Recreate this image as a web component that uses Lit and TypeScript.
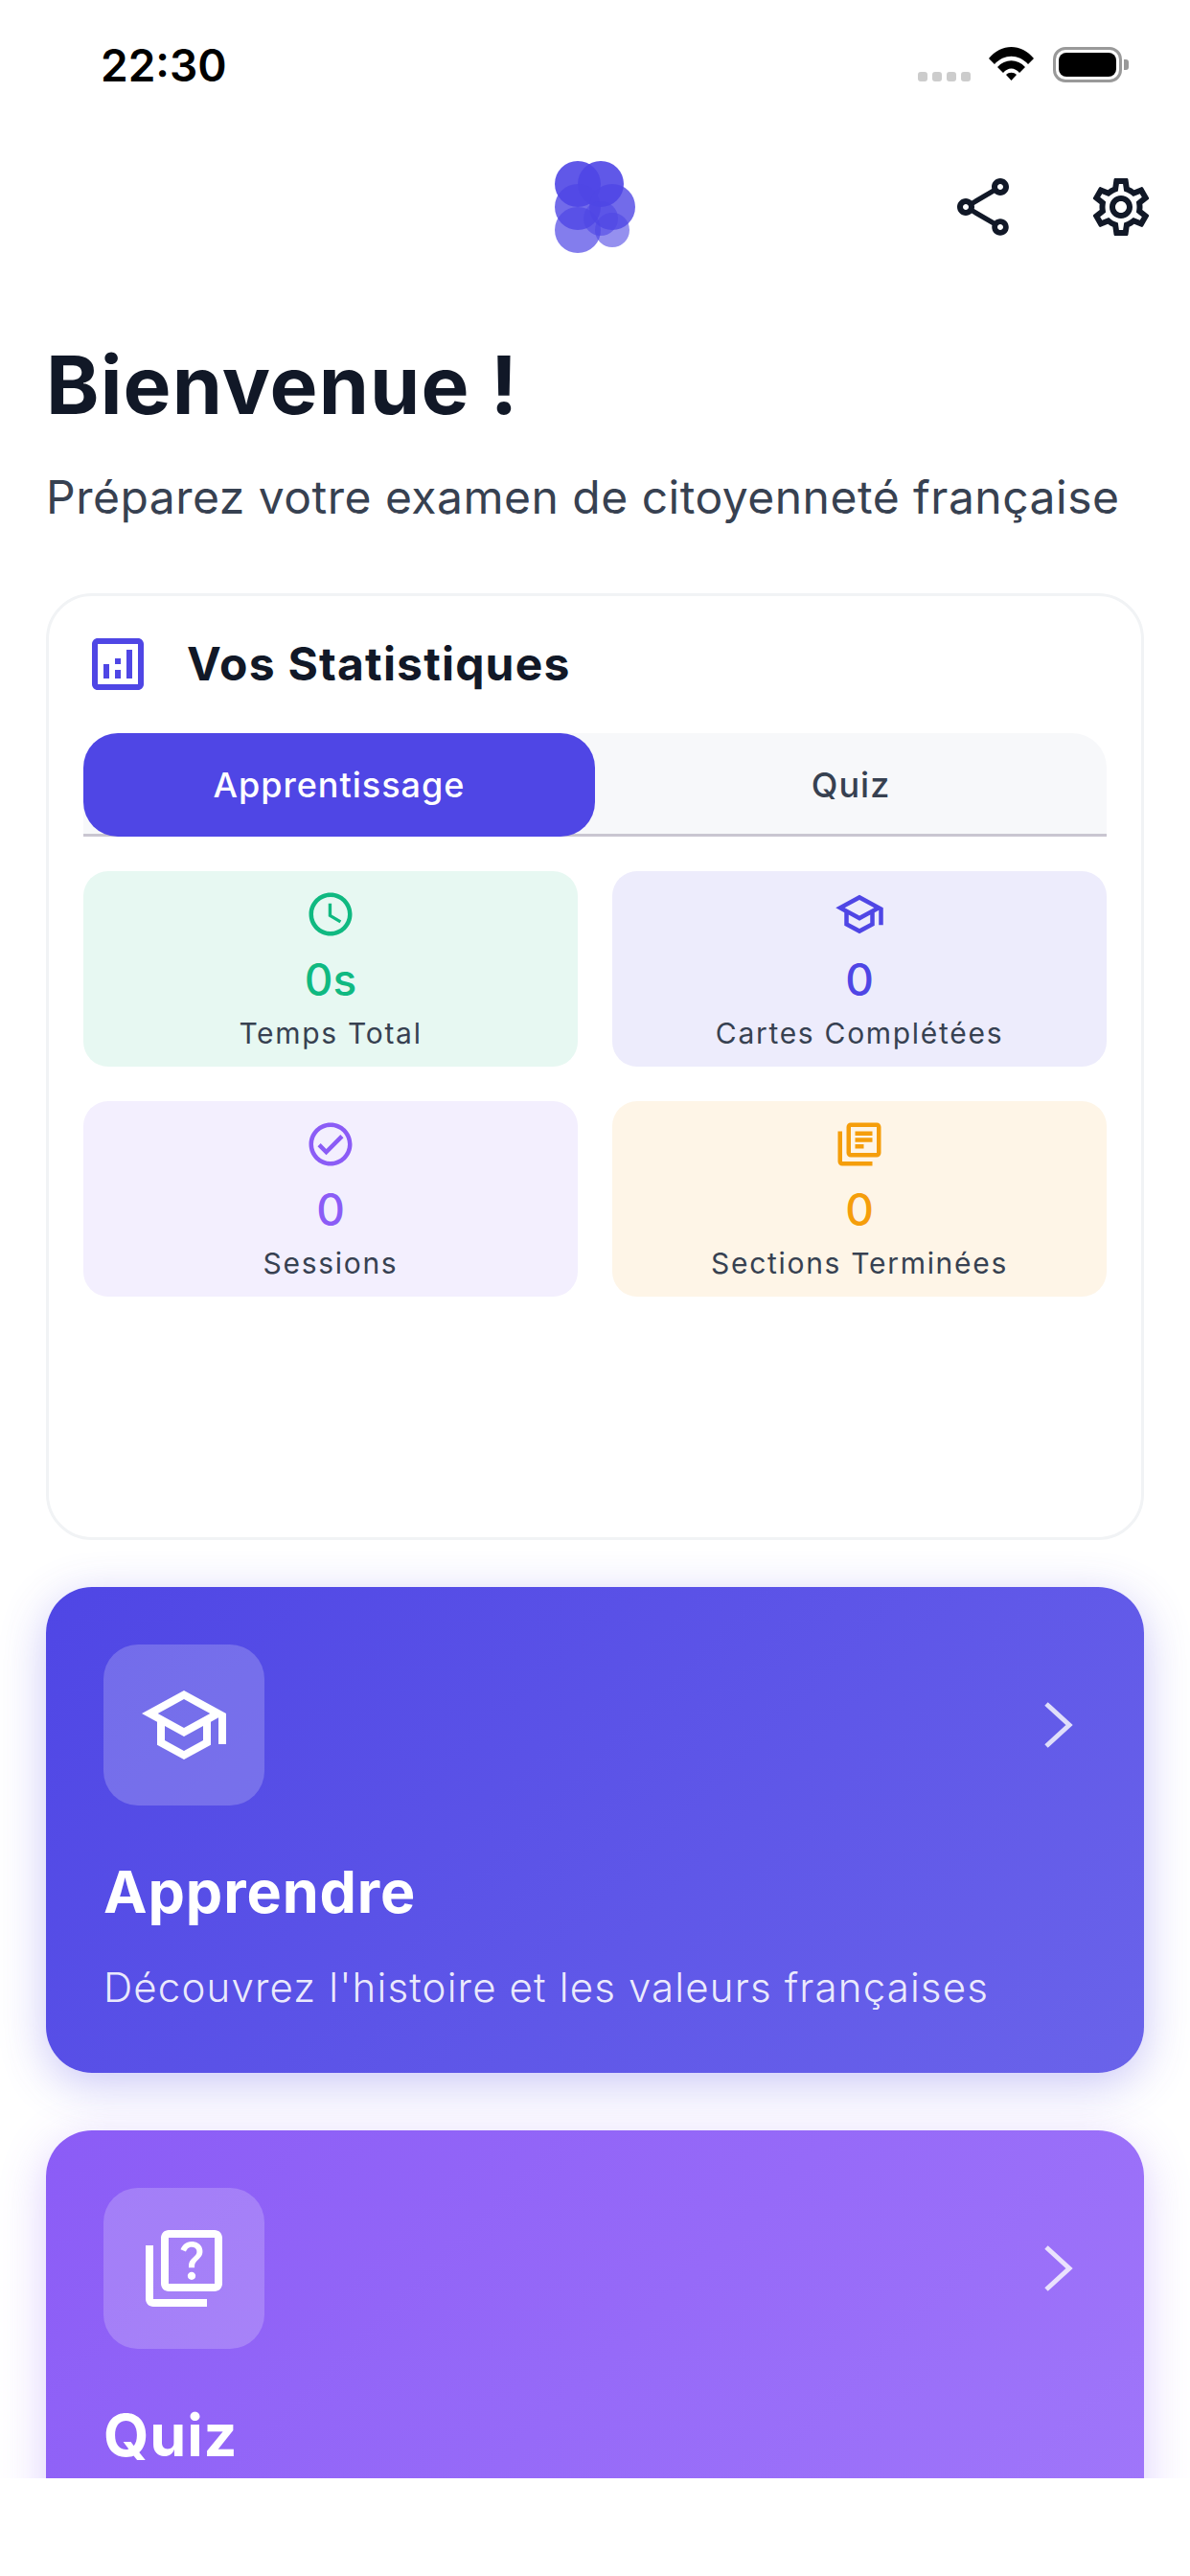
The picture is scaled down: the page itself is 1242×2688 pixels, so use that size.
import { LitElement, html, css, svg } from "lit";
import { customElement } from "lit/decorators.js";

const P = {
  share: "M18 16.08c-.76 0-1.44.3-1.96.77L8.91 12.7c.05-.23.09-.46.09-.7s-.04-.47-.09-.7l7.05-4.11c.54.5 1.25.81 2.04.81 1.66 0 3-1.34 3-3s-1.34-3-3-3-3 1.34-3 3c0 .24.04.47.09.7L8.04 9.81C7.5 9.31 6.79 9 6 9c-1.66 0-3 1.34-3 3s1.34 3 3 3c.79 0 1.5-.31 2.04-.81l7.12 4.16c-.05.21-.08.43-.08.65 0 1.61 1.31 2.92 2.92 2.92s2.92-1.31 2.92-2.92c0-1.61-1.31-2.92-2.92-2.92zM18 4c.55 0 1 .45 1 1s-.45 1-1 1-1-.45-1-1 .45-1 1-1zM6 13c-.55 0-1-.45-1-1s.45-1 1-1 1 .45 1 1-.45 1-1 1zm12 7.02c-.55 0-1-.45-1-1s.45-1 1-1 1 .45 1 1-.45 1-1 1z",
  gear: "M19.43 12.98c.04-.32.07-.64.07-.98 0-.34-.03-.66-.07-.98l2.11-1.65c.19-.15.24-.42.12-.64l-2-3.46c-.09-.16-.26-.25-.44-.25-.06 0-.12.01-.17.03l-2.49 1c-.52-.4-1.08-.73-1.69-.98l-.38-2.65C14.46 2.18 14.25 2 14 2h-4c-.25 0-.46.18-.49.42l-.38 2.65c-.61.25-1.17.59-1.69.98l-2.49-1c-.06-.02-.12-.03-.18-.03-.17 0-.34.09-.43.25l-2 3.46c-.13.22-.07.49.12.64l2.11 1.65c-.04.32-.07.65-.07.98 0 .33.03.66.07.98l-2.11 1.65c-.19.15-.24.42-.12.64l2 3.46c.09.16.26.25.44.25.06 0 .12-.01.17-.03l2.49-1c.52.4 1.08.73 1.69.98l.38 2.65c.03.24.24.42.49.42h4c.25 0 .46-.18.49-.42l.38-2.65c.61-.25 1.17-.59 1.69-.98l2.49 1c.06.02.12.03.18.03.17 0 .34-.09.43-.25l2-3.46c.12-.22.07-.49-.12-.64l-2.11-1.65zm-1.98-1.71c.04.31.05.52.05.73 0 .21-.02.43-.05.73l-.14 1.13.89.7 1.08.84-.7 1.21-1.27-.51-1.04-.42-.9.68c-.43.32-.84.56-1.25.73l-1.06.43-.16 1.13-.2 1.35h-1.4l-.19-1.35-.16-1.13-1.06-.43c-.43-.18-.83-.41-1.23-.71l-.91-.7-1.06.43-1.27.51-.7-1.21 1.08-.84.89-.7-.14-1.13c-.03-.31-.05-.54-.05-.74s.02-.43.05-.73l.14-1.13-.89-.7-1.08-.84.7-1.21 1.27.51 1.04.42.9-.68c.43-.32.84-.56 1.25-.73l1.06-.43.16-1.13.2-1.35h1.39l.19 1.35.16 1.13 1.06.43c.43.18.83.41 1.23.71l.91.7 1.06-.43 1.27-.51.7 1.21-1.07.85-.89.7.14 1.13zM12 8c-2.21 0-4 1.79-4 4s1.79 4 4 4 4-1.79 4-4-1.79-4-4-4zm0 6c-1.1 0-2-.9-2-2s.9-2 2-2 2 .9 2 2-.9 2-2 2z",
  analytics: "M19 3H5c-1.1 0-2 .9-2 2v14c0 1.1.9 2 2 2h14c1.1 0 2-.9 2-2V5c0-1.1-.9-2-2-2zm0 16H5V5h14v14zM7 12h2v5H7zm8-5h2v10h-2zm-4 7h2v3h-2zm0-4h2v2h-2z",
  clock: "M11.99 2C6.47 2 2 6.48 2 12s4.47 10 9.99 10C17.52 22 22 17.52 22 12S17.52 2 11.99 2zM12 20c-4.42 0-8-3.58-8-8s3.58-8 8-8 8 3.58 8 8-3.58 8-8 8zM12.5 7H11v6l5.25 3.15.75-1.23-4.5-2.67z",
  school: "M12 3L1 9l4 2.18v6L12 21l7-3.82v-6l2-1.09V17h2V9L12 3zm6.82 6L12 12.72 5.18 9 12 5.28 18.82 9zM17 15.99l-5 2.73-5-2.73v-3.72L12 15l5-2.73v3.72z",
  check: "M12 2C6.48 2 2 6.48 2 12s4.48 10 10 10 10-4.48 10-10S17.52 2 12 2zm0 18c-4.41 0-8-3.59-8-8s3.59-8 8-8 8 3.59 8 8-3.59 8-8 8zm4.59-12.42L10 14.17l-2.59-2.58L6 13l4 4 8-8z",
  books: "M4 6H2v14c0 1.1.9 2 2 2h14v-2H4V6zm16-4H8c-1.1 0-2 .9-2 2v12c0 1.1.9 2 2 2h12c1.1 0 2-.9 2-2V4c0-1.1-.9-2-2-2zm0 14H8V4h12v12zM10 9h8v2h-8zm0 3h4v2h-4zm0-6h8v2h-8z",
  quiz: "M4 6H2v14c0 1.1.9 2 2 2h14v-2H4V6zm16-4H8c-1.1 0-2 .9-2 2v12c0 1.1.9 2 2 2h12c1.1 0 2-.9 2-2V4c0-1.1-.9-2-2-2zm0 14H8V4h12v12zm-6.49-5.84c.41-.73 1.18-1.16 1.63-1.8.48-.68.21-1.94-1.14-1.94-.88 0-1.32.67-1.5 1.23l-1.37-.57C11.51 5.96 12.52 5 13.99 5c1.23 0 2.08.56 2.51 1.26.37.6.58 1.73.01 2.57-.63.93-1.23 1.21-1.56 1.81-.13.24-.18.4-.18 1.18h-1.52c.01-.41-.06-1.08.26-1.66zm-.56 3.79c0-.59.47-1.04 1.05-1.04.59 0 1.04.45 1.04 1.04 0 .58-.44 1.05-1.04 1.05-.58 0-1.05-.47-1.05-1.05z",
};

const icon = (d: string, size: number, color: string) =>
  html`<svg width=${size} height=${size} viewBox="0 0 24 24" fill=${color} class="ic">${svg`<path d=${d}></path>`}</svg>`;

const chevron = html`<svg class="chev" width="72" height="72" viewBox="0 0 72 72" fill="none" stroke="#fff" stroke-width="5" stroke-miterlimit="10"><polyline points="30,14 54,36 30,58"></polyline></svg>`;

const CIRCLES: [number, number, number, number][] = [
  [24, 24, 24, 0.9], [48, 24, 24, 0.9], [24, 48, 24, 0.8], [60, 48, 24, 0.8],
  [24, 72, 24, 0.7], [48, 60, 18, 0.6], [60, 72, 18, 0.6],
];

const STATS = [
  { icon: P.clock, value: "0s", label: "Temps Total", color: "#10b981", bg: "#e7f8f2" },
  { icon: P.school, value: "0", label: "Cartes Complétées", color: "#4f46e5", bg: "#edecfc" },
  { icon: P.check, value: "0", label: "Sessions", color: "#8b5cf6", bg: "#f3effe" },
  { icon: P.books, value: "0", label: "Sections Terminées", color: "#f59e0b", bg: "#fef5e7" },
];

@customElement("app-root")
export class AppRoot extends LitElement {
  static styles = css`
    :host { display: block; width: 1242px; height: 2688px; background: #fff; font-family: Inter, "Liberation Sans", sans-serif; overflow: hidden; }
    .ic { display: block; flex: none; }
    .viewport { height: 2586px; overflow: hidden; }
    .status { height: 156px; box-sizing: border-box; padding: 0 64px 0 105px; display: flex; justify-content: space-between; align-items: flex-start; }
    .time { font-size: 46px; line-height: 48px; font-weight: 600; color: #000; margin-top: 44px; }
    .sys { display: flex; align-items: flex-start; margin-top: 49px; }
    .dots { display: flex; gap: 5px; margin-top: 26px; margin-right: 19px; }
    .dots i { width: 10px; height: 10px; border-radius: 3px; background: #ccc; }
    .wifi { display: block; }
    .battery { display: flex; align-items: center; margin-left: 20px; gap: 2px; }
    .batt-body { width: 72px; height: 37px; box-sizing: border-box; border: 3px solid #999; border-radius: 13px; padding: 3px; }
    .batt-fill { height: 100%; background: #000; border-radius: 8px; }
    .nub { width: 5px; height: 11px; background: #999; border-radius: 0 3px 3px 0; }
    .header { height: 120px; display: grid; grid-template-columns: 1fr auto 1fr; align-items: center; padding: 0 36px; }
    .logo { display: block; grid-column: 2; }
    .actions { display: flex; justify-content: flex-end; gap: 72px; }
    .content { padding: 0 48px; }
    h1 { margin: 76px 0 0; font-size: 84px; line-height: 100px; font-weight: 700; letter-spacing: 1.1px; color: #111827; }
    .sub { margin: 38px 0 0; font-size: 48px; line-height: 58px; color: #374151; letter-spacing: 0.49px; white-space: nowrap; }
    .card { margin-top: 71px; height: 988px; box-sizing: border-box; border: 3px solid #f1f3f5; border-radius: 48px; padding: 35px 36px; }
    .card-head { display: flex; align-items: center; gap: 36px; height: 72px; }
    .card-head h2 { margin: 0; font-size: 48px; line-height: 60px; font-weight: 700; letter-spacing: 1.2px; color: #111827; }
    .tabs { display: flex; margin-top: 36px; background: #f7f8fa; border-radius: 36px 36px 0 0; border-bottom: 3px solid #c9c6d1; height: 105px; }
    .tab { flex: 1; height: 108px; box-sizing: border-box; display: flex; align-items: center; justify-content: center; font-size: 36px; font-weight: 500; letter-spacing: 1px; color: #374151; border-radius: 36px; }
    .tab.on { background: #4f46e5; color: #fff; }
    .grid { display: grid; grid-template-columns: 516px 516px; gap: 36px; margin-top: 36px; }
    .tile { height: 204px; box-sizing: border-box; border-radius: 26px; padding-top: 18px; display: flex; flex-direction: column; align-items: center; }
    .tile .val { font-size: 46px; line-height: 54px; font-weight: 500; margin-top: 14px; }
    .tile .lab { font-size: 30px; line-height: 36px; letter-spacing: 1.7px; color: #374151; margin-top: 11px; }
    .hero { border-radius: 48px; padding: 60px; color: #fff; box-sizing: border-box; }
    .hero.a { margin-top: 49px; height: 507px; background: linear-gradient(135deg, #4f46e5, #6a63ea); box-shadow: 0 12px 48px rgba(79,70,229,.3); }
    .hero.b { margin-top: 60px; height: 507px; background: linear-gradient(135deg, #8b5cf6, #a178fa); box-shadow: 0 12px 48px rgba(139,92,246,.3); }
    .hero-top { display: flex; justify-content: space-between; align-items: center; }
    .ibox { width: 168px; height: 168px; border-radius: 36px; background: rgba(255,255,255,.2); display: flex; align-items: center; justify-content: center; }
    .chev { display: block; opacity: .8; }
    .hero h3 { margin: 50px 0 0; font-size: 61px; line-height: 80px; font-weight: 700; letter-spacing: 0.9px; }
    .hero p { margin: 34px 0 0; font-size: 42px; line-height: 52px; font-weight: 300; letter-spacing: 1.15px; color: rgba(255,255,255,.9); white-space: nowrap; }
  `;

  render() {
    return html`
      <div class="viewport">
        <div class="status">
          <div class="time">22:30</div>
          <div class="sys">
            <div class="dots"><i></i><i></i><i></i><i></i></div>
            <svg class="wifi" width="47" height="35" viewBox="0 0 47 35" fill="#000">
              <path d="M0 12 C13 -4 34 -4 47 12 L41 18 C31 7 16 7 6 18Z"></path>
              <path d="M9 21 C17 12 30 12 38 21 L32 27 C27 21 20 21 15 27Z"></path>
              <path d="M18 29 C21 26 26 26 29 29 L23.5 35Z"></path>
            </svg>
            <div class="battery"><div class="batt-body"><div class="batt-fill"></div></div><div class="nub"></div></div>
          </div>
        </div>
        <div class="header">
          <svg class="logo" width="84" height="96" viewBox="0 0 84 96">
            ${CIRCLES.map(([x, y, r, o]) => svg`<circle cx=${x} cy=${y} r=${r} fill="#4f46e5" fill-opacity=${o}></circle>`)}
          </svg>
          <div class="actions">${icon(P.share, 72, "#111827")}${icon(P.gear, 72, "#111827")}</div>
        </div>
        <div class="content">
          <h1>Bienvenue !</h1>
          <p class="sub">Préparez votre examen de citoyenneté française</p>
          <section class="card">
            <div class="card-head">${icon(P.analytics, 72, "#4f46e5")}<h2>Vos Statistiques</h2></div>
            <div class="tabs"><div class="tab on">Apprentissage</div><div class="tab">Quiz</div></div>
            <div class="grid">
              ${STATS.map(
                (s) => html`<div class="tile" style="background:${s.bg}">
                  ${icon(s.icon, 54, s.color)}
                  <div class="val" style="color:${s.color}">${s.value}</div>
                  <div class="lab">${s.label}</div>
                </div>`
              )}
            </div>
          </section>
          <section class="hero a">
            <div class="hero-top"><div class="ibox">${icon(P.school, 96, "#fff")}</div>${chevron}</div>
            <h3>Apprendre</h3>
            <p>Découvrez l'histoire et les valeurs françaises</p>
          </section>
          <section class="hero b">
            <div class="hero-top"><div class="ibox">${icon(P.quiz, 96, "#fff")}</div>${chevron}</div>
            <h3>Quiz</h3>
          </section>
        </div>
      </div>
    `;
  }
}
